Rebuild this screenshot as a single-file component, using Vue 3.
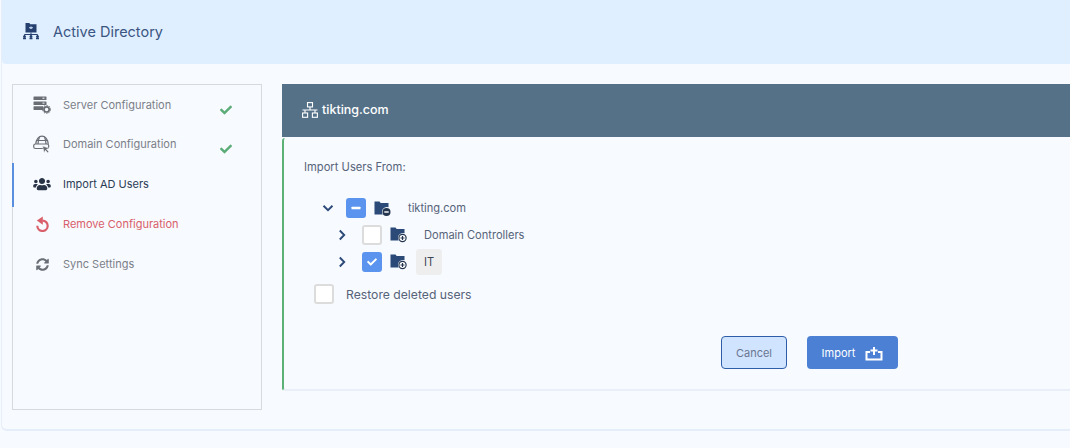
<script setup>
const nav = [
  { key: 'server', label: 'Server Configuration', done: true },
  { key: 'domain', label: 'Domain Configuration', done: true },
  { key: 'users', label: 'Import AD Users', active: true },
  { key: 'undo', label: 'Remove Configuration', danger: true },
  { key: 'sync', label: 'Sync Settings' }
]
</script>

<template>
  <div class="page">
    <div class="card">
      <header class="top">
        <svg class="top-icon" viewBox="0 0 18 18" width="18" height="18">
          <path fill="#25406f" d="M3.500 1h3.800l1 1.200h6.200v8.300h-11z" />
          <rect x="7" y="5.200" width="4" height="1" fill="#b9cfea" />
          <circle cx="9" cy="5.700" r="1.200" fill="#b9cfea" />
          <path fill="none" stroke="#25406f" stroke-width="1" d="M9 10.500v3M2.500 14v-1.500h13V14M9 13v1" />
          <circle cx="2.500" cy="14.600" r="1.400" fill="#25406f" />
          <circle cx="9" cy="14.600" r="1.400" fill="#25406f" />
          <circle cx="15.500" cy="14.600" r="1.400" fill="#25406f" />
          <rect x="1" y="15.400" width="3" height="1.800" rx="0.500" fill="#25406f" />
          <rect x="7.500" y="15.400" width="3" height="1.800" rx="0.500" fill="#25406f" />
          <rect x="14" y="15.400" width="3" height="1.800" rx="0.500" fill="#25406f" />
        </svg>
        <h1>Active Directory</h1>
      </header>

      <div class="content">
        <aside class="side">
          <div
            v-for="item in nav"
            :key="item.key"
            class="item"
            :class="[item.key, { active: item.active, danger: item.danger }]"
          >
            <span class="ico">
              <svg v-if="item.key === 'server'" viewBox="0 0 18 18" width="18" height="18">
                <rect x="0.500" y="0.500" width="13" height="3.600" rx="0.600" fill="#6a6e74" />
                <rect x="0.500" y="5.400" width="13" height="3.600" rx="0.600" fill="#6a6e74" />
                <rect x="0.500" y="10.300" width="10" height="3.600" rx="0.600" fill="#6a6e74" />
                <rect x="9.500" y="1.700" width="2" height="1" fill="#f7faff" />
                <rect x="9.500" y="6.600" width="2" height="1" fill="#f7faff" />
                <circle cx="13.600" cy="13.400" r="2.600" fill="#f7faff" stroke="#6a6e74" stroke-width="1.700" />
                <circle cx="13.600" cy="13.400" r="4" fill="none" stroke="#6a6e74" stroke-width="1" stroke-dasharray="1.300 1.300" />
              </svg>
              <svg v-else-if="item.key === 'domain'" viewBox="0 0 18 18" width="18" height="18">
                <g fill="none" stroke="#6a6e74" stroke-width="1.200">
                  <path d="M2.800 9C3 4.500 5.800 1.200 9 1.200s6 3.300 6.200 7.800" />
                  <path d="M6.500 2.200C5.500 4 5 6 5 9M11.500 2.200c1 1.800 1.500 3.800 1.500 6.800M3.500 5.500h11" />
                  <rect x="0.700" y="9" width="15" height="4.500" rx="1.800" />
                </g>
                <path fill="#6a6e74" d="M9.500 11l6.800 2.300-2.700 1 2.200 2.400-1.200 1-2.200-2.400-1.200 2.500z" stroke="#f7faff" stroke-width="0.500" />
              </svg>
              <svg v-else-if="item.key === 'users'" viewBox="0 0 640 512" width="18" height="14">
                <path fill="#2a3447" d="M96 224c35.300 0 64-28.700 64-64s-28.700-64-64-64-64 28.700-64 64 28.700 64 64 64zm448 0c35.300 0 64-28.700 64-64s-28.700-64-64-64-64 28.700-64 64 28.700 64 64 64zm32 32h-64c-17.600 0-33.500 7.100-45.100 18.600 40.300 22.100 68.900 62 75.100 109.400h66c17.700 0 32-14.300 32-32v-32c0-35.300-28.700-64-64-64zm-256 0c61.900 0 112-50.100 112-112S381.900 32 320 32 208 82.100 208 144s50.100 112 112 112zm76.800 32h-8.300c-20.800 10-43.900 16-68.500 16s-47.600-6-68.500-16h-8.300C179.600 288 128 339.600 128 403.200V432c0 26.500 21.500 48 48 48h288c26.500 0 48-21.500 48-48v-28.800c0-63.600-51.600-115.200-115.200-115.200zm-223.700-13.400C161.500 263.100 145.600 256 128 256H64c-35.300 0-64 28.700-64 64v32c0 17.700 14.300 32 32 32h65.900c6.300-47.400 34.900-87.300 75.200-109.400z" />
              </svg>
              <svg v-else-if="item.key === 'undo'" viewBox="0 0 13 16" width="13" height="16">
                <path fill="none" stroke="#d9606a" stroke-width="2.200" d="M6.500 4.600a5.200 5.200 0 1 1-5.200 5.200" />
                <path fill="#d9606a" d="M0.800 4.600L6.800 0.500v8.200z" />
              </svg>
              <svg v-else viewBox="0 0 512 512" width="13" height="15">
                <path fill="#6a6f77" d="M370.720 133.280C339.458 104.008 298.888 87.962 255.848 88c-77.458.068-144.328 53.178-162.791 126.850-1.344 5.363-6.122 9.150-11.651 9.150H24.103c-7.498 0-13.194-6.807-11.807-14.176C33.933 94.924 134.813 8 256 8c66.448 0 126.791 26.136 171.315 68.685L463.030 40.970C478.149 25.851 504 36.559 504 57.941V192c0 13.255-10.745 24-24 24H345.941c-21.382 0-32.090-25.851-16.971-40.971l41.750-41.749zM32 296h134.059c21.382 0 32.090 25.851 16.971 40.971l-41.750 41.750c31.262 29.273 71.835 45.319 114.876 45.280 77.418-.07 144.315-53.144 162.787-126.849 1.344-5.363 6.122-9.150 11.651-9.150h57.304c7.498 0 13.194 6.807 11.807 14.176C478.067 417.076 377.187 504 256 504c-66.448 0-126.791-26.136-171.315-68.685L48.970 471.030C33.851 486.149 8 475.441 8 454.059V320c0-13.255 10.745-24 24-24z" />
              </svg>
            </span>
            <span class="label">{{ item.label }}</span>
            <svg v-if="item.done" class="done" viewBox="0 0 512 512" width="12" height="12">
              <path fill="#5cac78" d="M173.898 439.404l-166.400-166.400c-9.997-9.997-9.997-26.206 0-36.204l36.203-36.204c9.997-9.998 26.206-9.998 36.204 0L192 312.690 432.095 72.596c9.997-9.997 26.206-9.997 36.204 0l36.203 36.204c9.997 9.997 9.997 26.206 0 36.204l-294.400 294.401c-9.998 9.997-26.207 9.997-36.204-.001z" />
            </svg>
          </div>
        </aside>

        <main class="main">
          <div class="panel-head">
            <svg viewBox="0 0 16 16" width="16" height="16" fill="none" stroke="#fff" stroke-width="1.100">
              <rect x="5.500" y="0.600" width="5" height="4.300" />
              <rect x="0.600" y="11" width="5" height="4.300" />
              <rect x="10.400" y="11" width="5" height="4.300" />
              <path d="M8 5v3M0.500 8h15M3 8v3M13 8v3" />
            </svg>
            <span>tikting.com</span>
          </div>

          <section class="panel-body">
            <p class="from">Import Users From:</p>

            <div class="tree">
              <div class="row first">
                <svg class="chev" viewBox="0 0 12 12" width="12" height="12"><path d="M1.500 3.800L6 8.200l4.500-4.400" /></svg>
                <span class="box on">
                  <svg viewBox="0 0 20 20" width="20" height="20"><rect x="5.500" y="8.700" width="9" height="2.600" rx="0.600" fill="#fff" /></svg>
                </span>
                <svg class="folder" viewBox="0 0 17 17" width="17" height="17">
                  <path fill="#2b4a78" d="M0.500 1.500h5l1.200 1.500h7.800v4.200a5 5 0 0 0-5.800 7.300H0.500z" />
                  <circle cx="12.500" cy="12" r="4" fill="#24364f" />
                  <rect x="10.300" y="11.300" width="4.400" height="1.400" fill="#fff" />
                </svg>
                <span class="name root-name">tikting.com</span>
              </div>
              <div class="row child">
                <svg class="chev" viewBox="0 0 12 12" width="12" height="12"><path d="M3.800 1.500L8.200 6l-4.400 4.500" /></svg>
                <span class="box"></span>
                <svg class="folder" viewBox="0 0 17 17" width="17" height="17">
                  <path fill="#2b4a78" d="M0.500 1.500h5l1.200 1.500h7.800v4.200a5 5 0 0 0-5.800 7.300H0.500z" />
                  <circle cx="12.500" cy="12" r="3.600" fill="#fff" stroke="#24364f" stroke-width="1.200" />
                  <path stroke="#24364f" stroke-width="1.200" d="M10.500 12h4M12.500 10v4" />
                </svg>
                <span class="name">Domain Controllers</span>
              </div>
              <div class="row child">
                <svg class="chev" viewBox="0 0 12 12" width="12" height="12"><path d="M3.800 1.500L8.200 6l-4.400 4.500" /></svg>
                <span class="box on">
                  <svg viewBox="0 0 512 512" width="20" height="20"><path transform="translate(128 128) scale(.5)" fill="#fff" d="M173.898 439.404l-166.400-166.400c-9.997-9.997-9.997-26.206 0-36.204l36.203-36.204c9.997-9.998 26.206-9.998 36.204 0L192 312.690 432.095 72.596c9.997-9.997 26.206-9.997 36.204 0l36.203 36.204c9.997 9.997 9.997 26.206 0 36.204l-294.400 294.401c-9.998 9.997-26.207 9.997-36.204-.001z" /></svg>
                </span>
                <svg class="folder" viewBox="0 0 17 17" width="17" height="17">
                  <path fill="#2b4a78" d="M0.500 1.500h5l1.200 1.500h7.800v4.200a5 5 0 0 0-5.800 7.300H0.500z" />
                  <circle cx="12.500" cy="12" r="3.600" fill="#fff" stroke="#24364f" stroke-width="1.200" />
                  <path stroke="#24364f" stroke-width="1.200" d="M10.500 12h4M12.500 10v4" />
                </svg>
                <span class="chip">IT</span>
              </div>
            </div>

            <label class="restore">
              <span class="box"></span>
              <span>Restore deleted users</span>
            </label>

            <div class="actions">
              <button class="btn cancel" type="button">Cancel</button>
              <button class="btn import" type="button">
                Import
                <svg viewBox="0 0 18 16" width="18" height="16" fill="none" stroke="#fff" stroke-width="2">
                  <path d="M5 7H1.500v7.500h15V7H13" />
                  <path d="M9 2v8M5.500 5.500h7" />
                </svg>
              </button>
            </div>
          </section>
        </main>
      </div>
    </div>
  </div>
</template>

<style>
html, body { background: #f7faff; overflow: hidden; }
</style>

<style scoped>
.page {
  width: 1070px;
  height: 448px;
  overflow: hidden;
  background: #f7faff;
  font-family: Inter, "Liberation Sans", sans-serif;
}
.card {
  width: 1120px;
  height: 431px;
  margin-left: 1px;
  box-sizing: border-box;
  border: 1px solid #e6eef9;
  border-top: 0;
  border-bottom-width: 2px;
  border-radius: 0 0 6px 6px;
  background: #f7faff;
}
.top {
  height: 64px;
  display: flex;
  align-items: center;
  padding: 0 0 2px 20px;
  box-sizing: border-box;
  background: #e0efff;
  border-radius: 0 0 4px 4px;
}
.top h1 {
  margin: 0 0 0 13px;
  font-size: 14.500px;
  font-weight: 400;
  color: #3b5581;
}
.content {
  display: flex;
  align-items: flex-start;
  gap: 20px;
  padding: 20px 0 0 10px;
}
.side {
  width: 250px;
  height: 326px;
  box-sizing: border-box;
  border: 1px solid #d6d9dd;
  flex: none;
}
.item {
  position: relative;
  display: flex;
  align-items: center;
  height: 40px;
  padding-left: 20px;
  font-size: 11px;
  color: #7b8088;
}
.item.domain { margin-top: -1px; }
.item.active { color: #2c3c55; }
.item.active::before {
  content: "";
  position: absolute;
  left: -1px;
  top: -1px;
  bottom: -3px;
  width: 2px;
  background: #5a8fe0;
}
.item.danger { color: #d9606a; }
.ico {
  width: 18px;
  height: 18px;
  margin-right: 12px;
  display: flex;
  align-items: center;
  justify-content: center;
  flex: none;
}
.done { position: absolute; left: 207px; top: 19px; }
.main {
  width: 820px;
  flex: none;
}
.panel-head {
  height: 53px;
  background: #557188;
  display: flex;
  align-items: center;
  gap: 4px;
  padding: 0 0 2px 20px;
  box-sizing: border-box;
  color: #fff;
  font-size: 12.500px;
  font-weight: 500;
}
.panel-body {
  margin-top: 1px;
  height: 253px;
  box-sizing: border-box;
  border-left: 2px solid #5cb176;
  border-bottom: 2px solid #e9eff8;
  border-radius: 3px 0 0 3px;
  padding: 22px 0 0 20px;
  background: #f7faff;
}
.from {
  margin: 0;
  font-size: 11.200px;
  line-height: 14px;
  color: #566379;
}
.tree { margin-top: 21px; }
.row {
  height: 27px;
  display: flex;
  align-items: center;
  padding-left: 18px;
  font-size: 11.100px;
  color: #566379;
}
.row.first { height: 26px; }
.row.child { padding-left: 32px; }
.row.child .chev { margin-right: 14px; }
.chev {
  fill: none;
  stroke: #2b4a78;
  stroke-width: 1.900;
  flex: none;
  margin-right: 12px;
}
.box {
  width: 20px;
  height: 20px;
  box-sizing: border-box;
  border: 2px solid #dcdcdc;
  border-radius: 3px;
  background: #fff;
  flex: none;
  display: block;
}
.box.on {
  border: 0;
  background: #5b94ee;
}
.box svg { display: block; }
.folder { margin-left: 8px; flex: none; }
.name { margin-left: 17px; }
.chip {
  margin-left: 9px;
  width: 26px;
  height: 26px;
  border-radius: 3px;
  background: #eeeeee;
  display: flex;
  align-items: center;
  justify-content: center;
  color: #3d4654;
}
.restore {
  display: flex;
  align-items: center;
  gap: 12px;
  margin: 9px 0 0 10px;
  font-size: 12.200px;
  color: #566379;
}
.actions {
  display: flex;
  gap: 20px;
  margin: 32px 0 0 417px;
}
.btn {
  height: 33px;
  border-radius: 4px;
  font: inherit;
  font-size: 11px;
  box-sizing: border-box;
}
.cancel {
  width: 66px;
  background: #d0e4ff;
  border: 1px solid #2f5ea8;
  color: #6a7590;
}
.import {
  width: 91px;
  background: #4c80d4;
  border: 0;
  color: #fff;
  display: flex;
  align-items: center;
  justify-content: center;
  gap: 10px;
}
</style>
